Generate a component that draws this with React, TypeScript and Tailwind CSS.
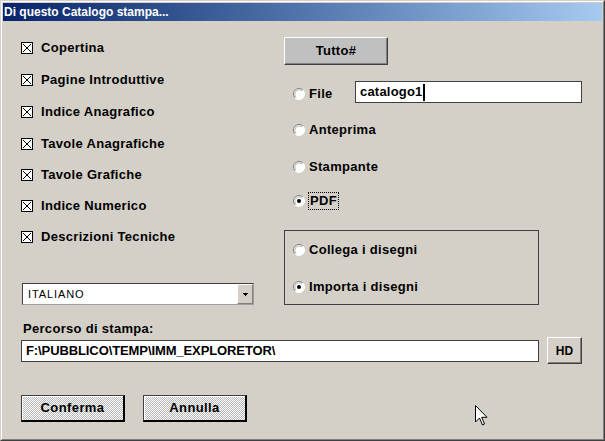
import React from "react";

function CheckBox({ label }: { label: string }) {
  return (
    <div className="flex items-center h-full">
      <svg width="12" height="12" viewBox="0 0 12 12" shapeRendering="crispEdges" className="shrink-0">
        <rect x="0.5" y="0.5" width="11" height="11" fill="#fff" stroke="#000" />
        <path d="M2 2 L10 10 M10 2 L2 10" stroke="#000" strokeWidth="1" shapeRendering="auto" />
      </svg>
      <span className="ml-[8px] text-[13px] leading-[16px] font-bold tracking-[0.3px] text-black whitespace-nowrap">
        {label}
      </span>
    </div>
  );
}

function Radio({ checked }: { checked?: boolean }) {
  return (
    <svg width="12" height="12" viewBox="0 0 12 12" className="shrink-0">
      <circle cx="6" cy="6" r="5.5" fill="#fff" />
      <path d="M2.1 9.9 A5.5 5.5 0 0 1 9.9 2.1" stroke="#808080" strokeWidth="1" fill="none" />
      <path d="M9.9 2.1 A5.5 5.5 0 0 1 2.1 9.9" stroke="#ffffff" strokeWidth="1" fill="none" />
      <path d="M2.9 9.1 A4.4 4.4 0 0 1 9.1 2.9" stroke="#bdbdbd" strokeWidth="1" fill="none" />
      {checked && <circle cx="6" cy="6" r="2" fill="#000" />}
    </svg>
  );
}

function RadioRow({ label, checked, focus }: { label: string; checked?: boolean; focus?: boolean }) {
  return (
    <div className="flex items-center h-[20px]">
      <Radio checked={checked} />
      <span
        className={
          focus
            ? "ml-[3px] px-px text-[13px] leading-[16px] font-bold tracking-[0.3px] text-black border border-dotted border-black whitespace-nowrap"
            : "ml-[4px] text-[13px] leading-[16px] font-bold tracking-[0.3px] text-black whitespace-nowrap"
        }
      >
        {label}
      </span>
    </div>
  );
}

export default function App() {
  const checks = [
    ["Copertina", "h-[32px]"],
    ["Pagine Introduttive", "h-[32px]"],
    ["Indice Anagrafico", "h-[32px]"],
    ["Tavole Anagrafiche", "h-[31px]"],
    ["Tavole Grafiche", "h-[31px]"],
    ["Indice Numerico", "h-[31px]"],
    ["Descrizioni Tecniche", "h-[31px]"],
  ];
  return (
    <div className="w-[605px] h-[441px] bg-[#d4d0c8] relative overflow-hidden font-['Liberation_Sans',Arial,sans-serif] text-black">
      <div className="w-full h-full border border-t-[#d4d0c8] border-l-[#d4d0c8] border-r-[#404040] border-b-[#404040]">
        <div className="w-full h-full border border-t-white border-l-white border-r-[#808080] border-b-[#808080] p-px flex flex-col">
          {/* Title bar */}
          <div className="h-[18px] shrink-0 flex items-center pl-[1px] bg-gradient-to-r from-[#0a246a] to-[#a6caf0]">
            <span className="text-white font-bold text-[12px] leading-[18px] whitespace-nowrap">
              Di questo Catalogo stampa...
            </span>
          </div>

          {/* Body */}
          <div className="flex-1 flex flex-col pl-[18px]">
            <div className="flex">
              {/* Left column */}
              <div className="w-[233px] pt-[11px] flex flex-col">
                {checks.map(([l, h]) => (
                  <div key={l} className={h}>
                    <CheckBox label={l} />
                  </div>
                ))}
                <div className="mt-[31px] ml-px w-[232px] h-[22px] flex bg-white border border-t-[#404040] border-l-[#404040] border-r-[#a0a0a0] border-b-[#a0a0a0]">
                  <div className="flex-1 flex items-center pl-[5px] text-[11px] tracking-[0.9px] leading-[14px]">
                    ITALIANO
                  </div>
                  <div className="w-[16px] h-full bg-[#d4d0c8] border border-t-white border-l-white border-r-[#808080] border-b-[#808080] flex items-center justify-center">
                    <svg width="5" height="3" viewBox="0 0 5 3" shapeRendering="crispEdges">
                      <path d="M0 0 H5 L2.5 3 Z" fill="#000" />
                    </svg>
                  </div>
                </div>
              </div>

              {/* Right column */}
              <div className="ml-[30px] w-[298px] pt-[16px] flex flex-col">
                <div className="w-[104px] h-[28px] bg-[#c0c0c0] border border-t-white border-l-white border-r-[#404040] border-b-[#404040] shadow-[inset_-1px_-1px_0_#808080] flex items-center justify-center text-[13px] font-bold tracking-[0.3px]">
                  Tutto#
                </div>

                <div className="mt-[16px] h-[22px] flex items-center">
                  <div className="w-[71px] pl-[9px] pt-[3px]">
                    <RadioRow label="File" />
                  </div>
                  <div className="w-[227px] h-[22px] bg-white border border-[#404040] flex items-center pl-[4px]">
                    <span className="text-[13px] leading-[16px] font-bold tracking-[0.2px]">catalogo1</span>
                    <span className="w-[2px] h-[17px] bg-black ml-px" />
                  </div>
                </div>

                <div className="mt-[17px] pl-[9px]">
                  <RadioRow label="Anteprima" />
                </div>
                <div className="mt-[17px] pl-[9px]">
                  <RadioRow label="Stampante" />
                </div>
                <div className="mt-[14px] pl-[9px]">
                  <RadioRow label="PDF" checked focus />
                </div>

                <div className="mt-[19px] w-[255px] h-[75px] border border-[#404040] pl-[8px] pt-[9px] flex flex-col">
                  <RadioRow label="Collega i disegni" />
                  <div className="mt-[17px]">
                    <RadioRow label="Importa i disegni" checked />
                  </div>
                </div>
              </div>
            </div>

            {/* Path */}
            <div className="mt-[16px] h-[16px] pl-[2px] text-[13px] leading-[16px] font-bold tracking-[0.3px]">
              Percorso di stampa:
            </div>
            <div className="h-[27px] flex items-center">
              <div className="w-[518px] h-[22px] bg-white border border-[#404040] flex items-center pl-[4px]">
                <span className="text-[13px] leading-[16px] font-bold tracking-[-0.1px] whitespace-nowrap">
                  F:\PUBBLICO\TEMP\IMM_EXPLORETOR\
                </span>
              </div>
              <div className="ml-[8px] w-[35px] h-[27px] bg-[#d4d0c8] border border-t-white border-l-white border-r-[#404040] border-b-[#404040] shadow-[inset_-1px_-1px_0_#808080] flex items-center justify-center text-[12px] font-bold">
                HD
              </div>
            </div>

            {/* Buttons */}
            <div className="mt-[31px] flex">
              <div className="w-[104px] h-[27px] border border-t-[#404040] border-l-[#404040] border-r-2 border-b-2 border-r-black border-b-black shadow-[inset_1px_1px_0_#fff] bg-[image:repeating-conic-gradient(#b8b8b8_0%_25%,#ffffff_0%_50%)] bg-[length:2px_2px] flex items-center justify-center text-[13px] font-bold tracking-[0.4px]">
                Conferma
              </div>
              <div className="ml-[18px] w-[104px] h-[27px] border border-t-[#404040] border-l-[#404040] border-r-2 border-b-2 border-r-black border-b-black shadow-[inset_1px_1px_0_#fff] bg-[image:repeating-conic-gradient(#b8b8b8_0%_25%,#ffffff_0%_50%)] bg-[length:2px_2px] flex items-center justify-center text-[13px] font-bold tracking-[0.4px]">
                Annulla
              </div>
            </div>
          </div>
        </div>
      </div>

      {/* Mouse cursor */}
      <svg className="absolute left-[475px] top-[405px]" width="13" height="21" viewBox="0 0 13 21">
        <path d="M0.5 0.5 L0.5 17 L4.5 13 L7.5 20 L9.5 19 L6.7 12.3 L12 12.3 Z" fill="#fff" stroke="#000" strokeWidth="1" strokeLinejoin="miter" />
      </svg>
    </div>
  );
}
